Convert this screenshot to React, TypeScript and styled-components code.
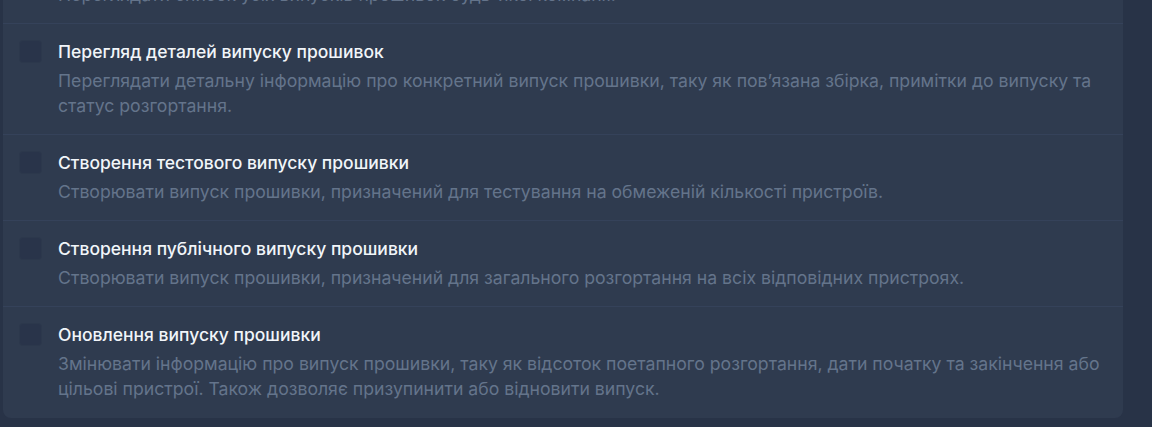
import styled, { createGlobalStyle } from 'styled-components';

const GlobalStyle = createGlobalStyle`
  html, body {
    margin: 0;
    padding: 0;
    background: #283347;
    overflow: hidden;
  }

  body {
    font-family: Inter, "Noto Sans", sans-serif;
    -webkit-font-smoothing: antialiased;
  }
`;

const Page = styled.div`
  padding: 0 29px 11px 3px;
`;

const Card = styled.ul`
  list-style: none;
  margin: -62px 0 0;
  padding: 0;

  width: 1120px;
  background: #2f3b4f;
  border-radius: 8px;
`;

const PermissionRow = styled.li<{ $last?: boolean }>`
  display: flex;
  align-items: flex-start;
  gap: 16px;

  padding: 16px;
  border-bottom: 1px solid ${({ $last }) => ($last ? 'transparent' : '#35425a')};
`;

const CheckBox = styled.span`
  flex: none;
  box-sizing: border-box;
  width: 23px;
  height: 23px;

  background: #29344a;
  border: 1px solid #2c384c;
  border-radius: 4px;
`;

const Texts = styled.div`
  display: flex;
  flex-direction: column;
  gap: 4px;
`;

const Title = styled.div`
  color: #f1f5f9;
  font-size: 17.5px;
  font-weight: 500;
  line-height: 24px;
`;

const Description = styled.div`
  color: #64748b;
  font-size: 17.65px;
  line-height: 25px;
`;

const permissions = [
  {
    title: 'Перегляд випусків прошивок',
    description: 'Переглядати список усіх випусків прошивок будь-якої компанії.',
  },
  {
    title: 'Перегляд деталей випуску прошивок',
    description:
      'Переглядати детальну інформацію про конкретний випуск прошивки, таку як пов’язана збірка, примітки до випуску та статус розгортання.',
  },
  {
    title: 'Створення тестового випуску прошивки',
    description: 'Створювати випуск прошивки, призначений для тестування на обмеженій кількості пристроїв.',
  },
  {
    title: 'Створення публічного випуску прошивки',
    description: 'Створювати випуск прошивки, призначений для загального розгортання на всіх відповідних пристроях.',
  },
  {
    title: 'Оновлення випуску прошивки',
    description:
      'Змінювати інформацію про випуск прошивки, таку як відсоток поетапного розгортання, дати початку та закінчення або цільові пристрої. Також дозволяє призупинити або відновити випуск.',
  },
];

export default function App() {
  return (
    <>
      <GlobalStyle />

      <Page>
        <Card>
          {permissions.map((permission, index) => (
            <PermissionRow key={permission.title} $last={index === permissions.length - 1}>
              <CheckBox role="checkbox" aria-checked="false" />

              <Texts>
                <Title>{permission.title}</Title>
                <Description>{permission.description}</Description>
              </Texts>
            </PermissionRow>
          ))}
        </Card>
      </Page>
    </>
  );
}
